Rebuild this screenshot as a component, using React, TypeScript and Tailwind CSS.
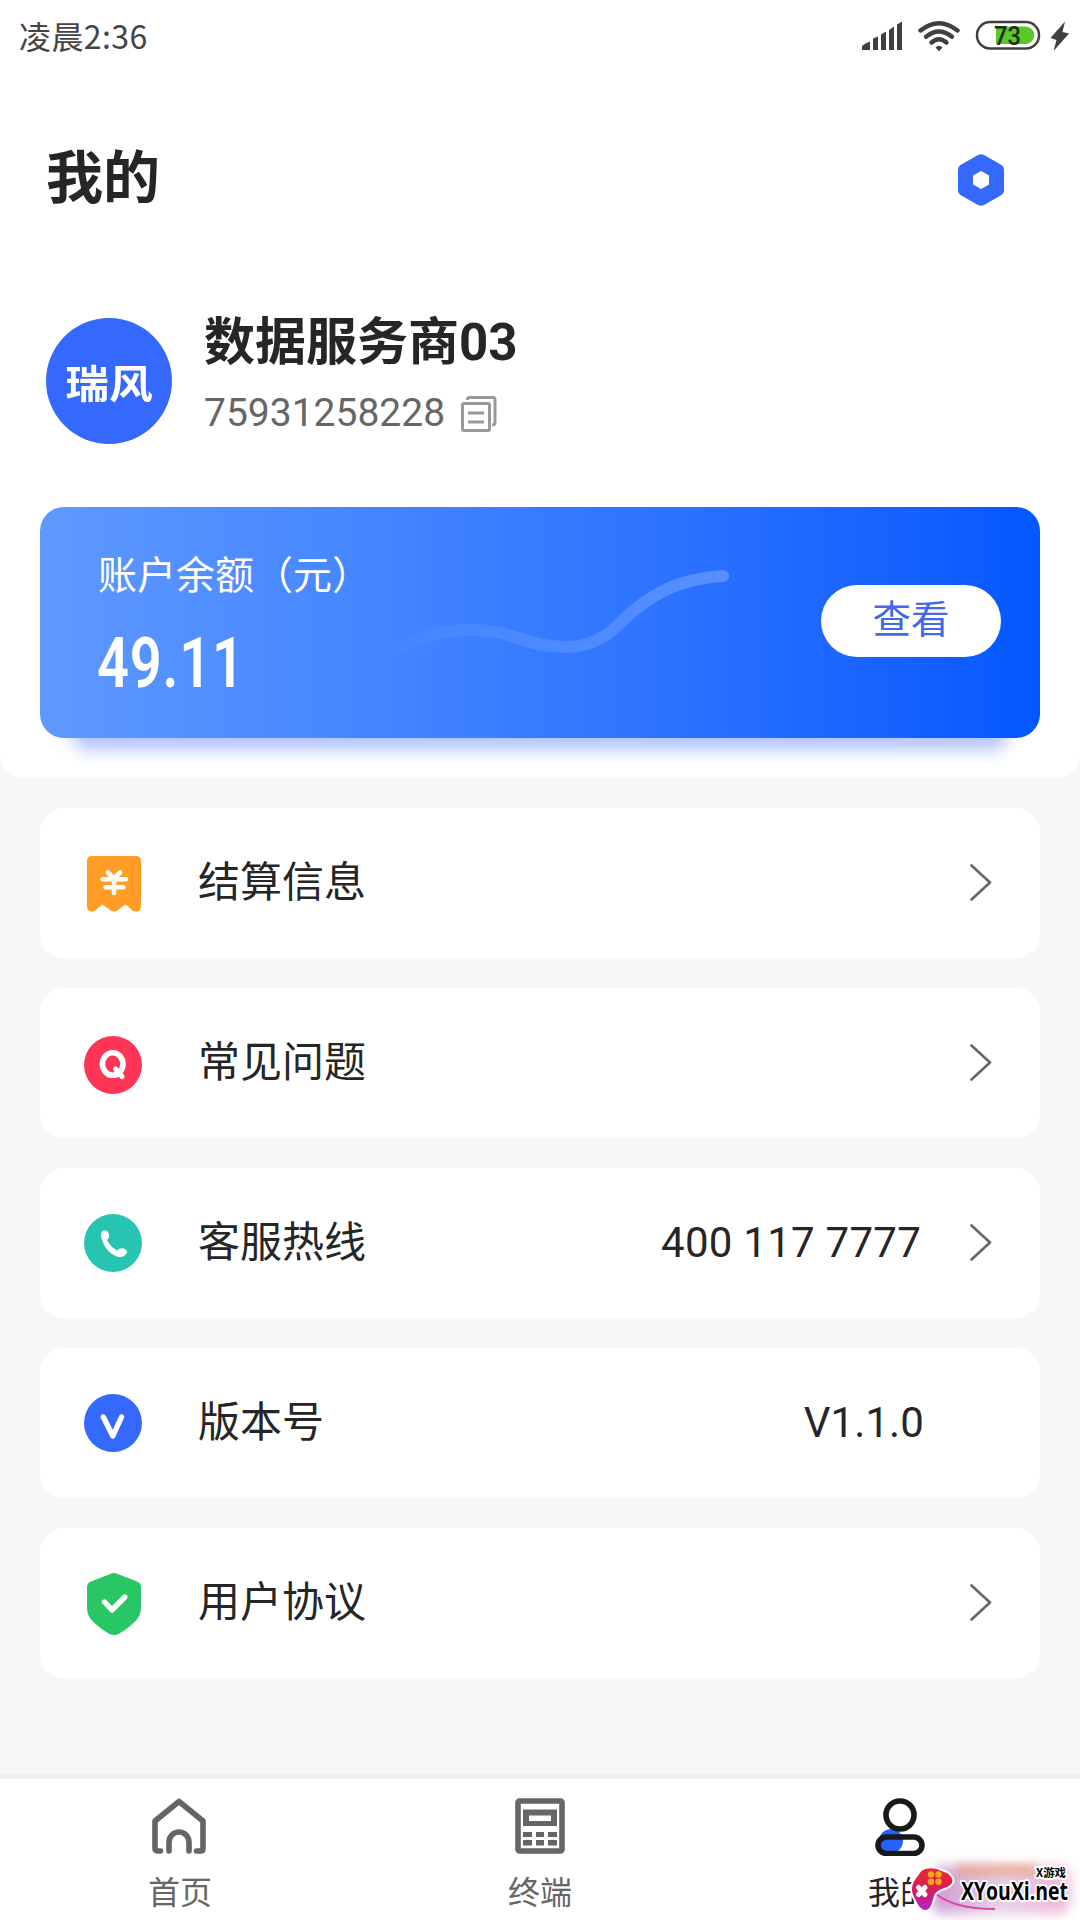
import React from "react";

const StatusBar = () => (
  <div className="flex h-[72px] items-center justify-between pl-[19px] pr-2.5 text-[#444444]">
    <p className="pb-[3px] font-['Noto_Sans_CJK_SC',sans-serif] text-[32px] leading-none tracking-[0.4px]">
      凌晨2:36
    </p>
    <svg width="212" height="40" viewBox="858 16 212 40" fill="#404040">
      <path d="M862 50v-4q3-3 8-4.500v8.500z" />
      <path d="M873 50v-11.500l5-2v13.500z" />
      <path d="M881 50v-15.500l5-3v18.500z" />
      <path d="M889 50v-20l5-3.500v23.500z" />
      <path d="M897 50v-25.500l5-3v28.500z" />
      <g fill="none" stroke="#404040" strokeWidth="4.400" strokeLinecap="round">
        <path d="M920.500 30.500q18.500-14.500 37 0" />
        <path d="M926 36.700q13-10.500 26 0" />
        <path d="M931.500 42.500q7.500-6.500 15 0" />
      </g>
      <path d="M935.500 47.500q3.500-3.500 7 0l-3.500 3.800z" />
      <rect x="977" y="22" width="62" height="26.500" rx="13" fill="#fff" stroke="#404040" strokeWidth="2.500" />
      <path d="M996 26.500h29.500a8.800 8.800 0 0 1 0 17.600h-29.500z" fill="#5bc827" />
      <text
        x="994"
        y="44.500"
        fontSize="25.500"
        fontWeight="500"
        fill="#1f2d14"
        textLength="27"
        lengthAdjust="spacingAndGlyphs"
        className="font-[Roboto,sans-serif]"
      >
        73
      </text>
      <path d="M1065 21.500l-14.500 16.500 6 2-3 11 15.500-17.500-6.500-1.500z" />
    </svg>
  </div>
);

const ReceiptIcon = () => (
  <svg className="mt-0.5" width="54" height="56" viewBox="0 0 54 56">
    <path
      d="M5 0h44q5 0 5 5v46q-1 5-5.500 4.500-3 0-5.500-3.500l-4.500-3.500-5.500 4q-3 3-6 3t-6-3l-5.500-4-4.500 3.500q-3 3.500-6 3.500Q1 56 0 51V5q0-5 5-5z"
      fill="#ff9d24"
    />
    <path
      d="M21 16.500l6 6 6-6M15.500 23.300h23.500M18.500 31.300h18M27 23v14"
      fill="none"
      stroke="#fff"
      strokeWidth="4.600"
      strokeLinecap="round"
      strokeLinejoin="round"
    />
  </svg>
);

const QuestionIcon = () => (
  <svg width="58" height="58" viewBox="0 0 58 58">
    <circle cx="29" cy="29" r="29" fill="#ff3558" />
    <ellipse cx="28.700" cy="28" rx="10.300" ry="11.300" fill="none" stroke="#fff" strokeWidth="5.600" />
    <path d="M31.500 33l6.500 7.500" stroke="#fff" strokeWidth="5" strokeLinecap="round" />
  </svg>
);

const PhoneIcon = () => (
  <svg width="58" height="58" viewBox="0 0 58 58">
    <circle cx="29" cy="29" r="29" fill="#27c4b2" />
    <path
      d="M18 17.500q2.500-2 4.500-.8 3 1.500 2.500 6-.3 2.300-2 3.300 3 6.500 10 10.500 1.200-2 4.500-2.300 4-.2 5.300 2.500.6 2-1 3.800-3 3.300-8 2.300Q21 38.500 17 22.500q-.4-3 1-5z"
      fill="#fff"
    />
  </svg>
);

const VersionIcon = () => (
  <svg width="58" height="58" viewBox="0 0 58 58">
    <circle cx="29" cy="29" r="29" fill="#3568fc" />
    <path
      d="M19.300 23l9.500 19 8.700-19"
      fill="none"
      stroke="#fff"
      strokeWidth="5.400"
      strokeLinecap="round"
      strokeLinejoin="round"
    />
  </svg>
);

const ShieldIcon = () => (
  <svg className="mt-0.5" width="54" height="62" viewBox="0 0 54 62">
    <path
      d="M24 .7q3-1.200 6 0l19.500 7.500Q54 10 54 14v21q0 7-5 12.500-7 7.500-17.500 13.500-4.500 2-9 0Q12 55 5 47.500 0 42 0 35V14q0-4 4.500-5.800z"
      fill="#28c665"
    />
    <path
      d="M17.500 29l7.500 8 12.800-13"
      fill="none"
      stroke="#fff"
      strokeWidth="5.400"
      strokeLinecap="round"
      strokeLinejoin="round"
    />
  </svg>
);

const Chevron = () => (
  <svg width="22" height="38" viewBox="0 0 22 38" fill="none" stroke="#666666" strokeWidth="2.600">
    <path d="M1.500 1.500l18.500 17-18.500 17" strokeLinecap="round" strokeLinejoin="round" />
  </svg>
);

const menu = [
  { label: "结算信息", icon: <ReceiptIcon />, iconStyle: "pl-0.5", arrow: true },
  { label: "常见问题", icon: <QuestionIcon />, iconStyle: "pt-1", arrow: true },
  { label: "客服热线", icon: <PhoneIcon />, iconStyle: "", arrow: true, value: "400 117 7777" },
  { label: "版本号", icon: <VersionIcon />, iconStyle: "", value: "V1.1.0" },
  { label: "用户协议", icon: <ShieldIcon />, iconStyle: "pl-0.5", arrow: true },
];

const MenuItem = ({ item }: { item: (typeof menu)[number] }) => (
  <div className="flex h-[150px] items-center rounded-[24px] bg-white pl-11 pr-12 text-[42px] leading-none text-[#262626]">
    <div className={`flex w-[58px] shrink-0 justify-center ${item.iconStyle}`}>{item.icon}</div>
    <p className="ml-14 grow">{item.label}</p>
    {item.value && (
      <p className={item.arrow ? "mr-[49px] tracking-[0.25px]" : "mr-[68px] tracking-[0.1px]"}>{item.value}</p>
    )}
    {item.arrow && <Chevron />}
  </div>
);

const HomeIcon = () => (
  <svg className="mr-0.5" width="54" height="58" viewBox="0 0 54 58" fill="none" stroke="#666666" strokeWidth="5.600" strokeLinecap="round" strokeLinejoin="round">
    <path d="M8.500 53H5.500q-2.500 0-2.500-2.500V23L27 3.500l24 19.500V50.500q0 2.500-2.500 2.500h-4" />
    <path d="M17 53V44a10 10 0 0 1 20 0V53" />
  </svg>
);

const TerminalIcon = () => (
  <svg width="50" height="58" viewBox="0 0 50 58" fill="#666666">
    <rect x="3" y="3" width="44" height="50" rx="1.500" fill="none" stroke="#666666" strokeWidth="5.600" />
    <path d="M8 11.500h34v16.500H8zM14 17.500v5.500h22v-5.500z" fillRule="evenodd" />
    <path d="M8 34h9v5H8zM21 34h8v5h-8zM33 34h9v5h-9zM8 42h9v5.500H8zM21 42h8v5.500h-8zM33 42h9v5.500h-9z" />
  </svg>
);

const MineIcon = () => (
  <svg width="50" height="58" viewBox="0 0 50 58" fill="none" stroke="#191919" strokeWidth="5.600">
    <circle cx="16" cy="43" r="12" fill="#2463fb" stroke="none" />
    <circle cx="25" cy="17" r="14" fill="#fff" />
    <rect x="3" y="39" width="44" height="16.500" rx="8.250" />
  </svg>
);

const tabs = [
  { label: "首页", icon: <HomeIcon />, style: "text-[#666666]" },
  { label: "终端", icon: <TerminalIcon />, style: "text-[#666666]" },
  { label: "我的", icon: <MineIcon />, style: "text-[#262626]" },
];

const Watermark = () => (
  <div className="absolute bottom-0 right-0 h-[70px] w-[180px] overflow-hidden">
    <div className="absolute left-8 top-4 h-12 w-[138px] rounded-xl bg-linear-to-r from-[#cf9ad2] via-[#e6cfe8] to-[#f3b5da] blur-[6px]" />
    <div className="absolute left-14 top-3.5 h-3 w-20 bg-[#e8a184] opacity-70 blur-[4px]" />
    <svg className="absolute left-0 top-0" width="180" height="70" viewBox="0 0 180 70">
      <defs>
        <linearGradient id="pad" x1="0" y1="0" x2="0" y2="1">
          <stop offset="0" stopColor="#ea2b2b" />
          <stop offset="0.500" stopColor="#d81f55" />
          <stop offset="1" stopColor="#b41fd8" />
        </linearGradient>
      </defs>
      <path d="M35 43q18 16 60 16" fill="none" stroke="#d84aa8" strokeWidth="2" />
      <path
        d="M21 20C26 16 32 17 37 18L47 22C54 26 56 33 49 37C44 40 37 40 35 46C33 52 32 61 25 61C19 61 17 54 14 49C10 43 10 37 13 31Z"
        fill="url(#pad)"
        stroke="#fff"
        strokeWidth="2"
        strokeLinejoin="round"
      />
      <g fill="#ffa21f">
        <circle cx="31" cy="24.500" r="3.200" />
        <circle cx="38.500" cy="24.500" r="3.200" />
        <circle cx="31" cy="31.800" r="3.200" />
        <circle cx="38.500" cy="31.800" r="3.200" />
      </g>
      <path d="M18.500 37.500l6.500 7M25 37.500l-6.500 7" stroke="#fff" strokeWidth="5" strokeLinecap="round" />
      <g fill="#000" stroke="#fff" strokeWidth="4" paintOrder="stroke" strokeLinejoin="round" fontWeight="700">
        <text x="136" y="26.500" fontSize="11" textLength="30" lengthAdjust="spacingAndGlyphs" className="font-['Noto_Sans_CJK_SC',sans-serif]">
          X游戏
        </text>
        <text x="61" y="50" fontSize="25" textLength="107" lengthAdjust="spacingAndGlyphs" className="font-['Open_Sans',sans-serif]">
          XYouXi.net
        </text>
      </g>
    </svg>
  </div>
);

const App = () => {
  return (
    <div className="relative flex h-[1920px] w-[1080px] flex-col overflow-hidden bg-[#f7f7f7] font-[Roboto,'Noto_Sans_CJK_SC',sans-serif]">
      <div className="h-[778px] rounded-b-[24px] bg-white">
        <StatusBar />
        <div className="flex h-[216px] items-center justify-between pl-[46px] pr-[76px]">
          <h1 className="pb-1 text-[57px] font-bold leading-none text-[#262626]">我的</h1>
          <svg width="46" height="52" viewBox="0 0 46 52">
            <path
              d="M20 1q3-1.500 6 0l17.500 10q2.500 1.500 2.500 4.500v21q0 3-2.500 4.500L26 51q-3 1.500-6 0L2.500 41Q0 39.500 0 36.500v-21Q0 12.500 2.500 11z"
              fill="#3568fc"
            />
            <path d="M23 17l8 4.500v9l-8 4.500-8-4.500v-9z" fill="#fff" />
          </svg>
        </div>
        <div className="flex h-[219px] pl-[46px] pt-[14px]">
          <div className="mt-4 flex h-[126px] w-[126px] items-center justify-center rounded-full bg-[#3568fc]">
            <span className="scale-x-[1.12] pt-2 text-[39px] font-bold leading-none text-white">瑞风</span>
          </div>
          <div className="ml-8">
            <h2 className="mt-[15px] text-[51px] font-bold leading-none text-[#262626]">数据服务商03</h2>
            <div className="mt-[26px] flex items-center">
              <p className="text-[39px] leading-none text-[#666666]">75931258228</p>
              <svg className="ml-4" width="36" height="36" viewBox="0 0 36 36" fill="none" stroke="#999999" strokeWidth="3">
                <rect x="1.500" y="7.500" width="27" height="27" rx="1.500" />
                <path d="M6.500 4q0-2.500 2-2.500h23.500q2 0 2 2v23q0 2.500-3 2.500M7 17h16M7 26h16" />
              </svg>
            </div>
          </div>
        </div>
        <div className="relative mx-10 h-[231px]">
          <div className="absolute inset-x-8 bottom-[-12px] h-10 rounded-2xl bg-[#b3c4ff] blur-[8px]" />
          <div className="relative flex h-full justify-between rounded-[24px] bg-linear-to-r from-[#5f99ff] to-[#0357ff] pl-[58px] pr-[39px] text-white">
            <svg className="absolute left-0 top-0" width="1000" height="231" viewBox="0 0 1000 231">
              <defs>
                <linearGradient id="wave" gradientUnits="userSpaceOnUse" x1="325" y1="0" x2="690" y2="0">
                  <stop offset="0" stopColor="#fff" stopOpacity="0" />
                  <stop offset="1" stopColor="#fff" stopOpacity="0.230" />
                </linearGradient>
              </defs>
              <path
                d="M328 160C368 131 400 123 433 123C472 123 487 140 525 140C548 140 565 132 580 116C608 88 640 71 683 69"
                fill="none"
                stroke="url(#wave)"
                strokeWidth="12"
                strokeLinecap="round"
              />
            </svg>
            <div className="pt-[50px]">
              <p className="text-[39px] leading-none">账户余额（元）</p>
              <p className="-ml-px mt-8 origin-left scale-x-[0.8] text-[70px] font-semibold leading-none tracking-[1px]">
                49.11
              </p>
            </div>
            <button className="relative mt-[78px] h-[72px] w-[180px] rounded-[36px] bg-white pb-px text-[38.5px] leading-none text-[#4169e8]">
              查看
            </button>
          </div>
        </div>
      </div>
      <div className="mt-[30px] flex flex-col gap-[30px] px-10">
        {menu.map((item) => (
          <MenuItem key={item.label} item={item} />
        ))}
      </div>
      <div className="mt-auto grid h-[146px] grid-cols-3 border-t-[5px] border-[#f0f0f0] bg-white">
        {tabs.map((tab) => (
          <div key={tab.label} className={`flex flex-col items-center pt-[19px] ${tab.style}`}>
            {tab.icon}
            <p className="mt-[21px] text-[32px] leading-none">{tab.label}</p>
          </div>
        ))}
      </div>
      <Watermark />
    </div>
  );
};

export default App;
